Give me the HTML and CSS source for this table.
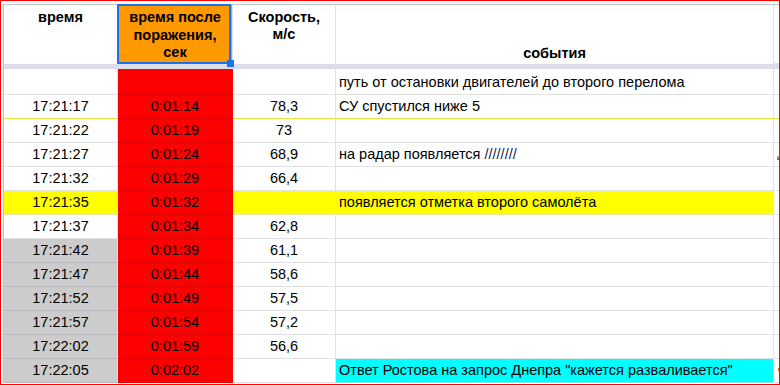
FILE: index.html
```html
<!DOCTYPE html>
<html lang="ru">
<head>
<meta charset="utf-8">
<title>Таблица</title>
<link rel="stylesheet" href="styles.css">
</head>
<body>
<div class="frame">
  <div class="sheet">
    <div class="row head">
      <div class="c h ctr top">время</div>
      <div class="c h ctr top orange">время после<br>поражения,<br>сек</div>
      <div class="c h ctr top">Скорость,<br>м/с</div>
      <div class="c h ctr">события</div>
      <div class="c last"></div>
    </div>
    <div class="band"></div>
    <div class="row first">
      <div class="c ctr"></div>
      <div class="c ctr red"></div>
      <div class="c ctr"></div>
      <div class="c txt">путь от остановки двигателей до второго перелома</div>
      <div class="c last"></div>
    </div>
    <div class="row yb">
      <div class="c ctr">17:21:17</div>
      <div class="c ctr red">0:01:14</div>
      <div class="c ctr">78,3</div>
      <div class="c txt">СУ спустился ниже 5</div>
      <div class="c last"></div>
    </div>
    <div class="row">
      <div class="c ctr">17:21:22</div>
      <div class="c ctr red">0:01:19</div>
      <div class="c ctr">73</div>
      <div class="c txt"></div>
      <div class="c last"></div>
    </div>
    <div class="row">
      <div class="c ctr">17:21:27</div>
      <div class="c ctr red">0:01:24</div>
      <div class="c ctr">68,9</div>
      <div class="c txt"><span>на радар появляется <span class="sl">////////</span></span></div>
      <div class="c last"><span class="frag blue"></span></div>
    </div>
    <div class="row">
      <div class="c ctr">17:21:32</div>
      <div class="c ctr red">0:01:29</div>
      <div class="c ctr">66,4</div>
      <div class="c txt"></div>
      <div class="c last"></div>
    </div>
    <div class="row">
      <div class="c ctr yellow">17:21:35</div>
      <div class="c ctr red">0:01:32</div>
      <div class="c ctr yellow"></div>
      <div class="c txt yellow">появляется отметка второго самолёта</div>
      <div class="c last"></div>
    </div>
    <div class="row">
      <div class="c ctr">17:21:37</div>
      <div class="c ctr red">0:01:34</div>
      <div class="c ctr">62,8</div>
      <div class="c txt"></div>
      <div class="c last"></div>
    </div>
    <div class="row">
      <div class="c ctr gray">17:21:42</div>
      <div class="c ctr red">0:01:39</div>
      <div class="c ctr">61,1</div>
      <div class="c txt"></div>
      <div class="c last"></div>
    </div>
    <div class="row">
      <div class="c ctr gray">17:21:47</div>
      <div class="c ctr red">0:01:44</div>
      <div class="c ctr">58,6</div>
      <div class="c txt"></div>
      <div class="c last"></div>
    </div>
    <div class="row">
      <div class="c ctr gray">17:21:52</div>
      <div class="c ctr red">0:01:49</div>
      <div class="c ctr">57,5</div>
      <div class="c txt"></div>
      <div class="c last"></div>
    </div>
    <div class="row">
      <div class="c ctr gray">17:21:57</div>
      <div class="c ctr red">0:01:54</div>
      <div class="c ctr">57,2</div>
      <div class="c txt"></div>
      <div class="c last"></div>
    </div>
    <div class="row">
      <div class="c ctr gray">17:22:02</div>
      <div class="c ctr red">0:01:59</div>
      <div class="c ctr">56,6</div>
      <div class="c txt"></div>
      <div class="c last"></div>
    </div>
    <div class="row">
      <div class="c ctr gray">17:22:05</div>
      <div class="c ctr red">0:02:02</div>
      <div class="c ctr"></div>
      <div class="c txt cyan">Ответ Ростова на запрос Днепра "кажется разваливается"</div>
      <div class="c last"><span class="frag orangef"></span></div>
    </div>
  </div>
</div>
</body>
</html>
```

FILE: styles.css
```css
* { box-sizing: border-box; }

html, body {
  margin: 0;
  padding: 0;
  background: #ffffff;
}

.frame {
  width: 780px;
  height: 385px;
  border: 1px solid #ff0000;
  padding: 3px 0 0 2px;
  overflow: hidden;
  font-family: "Liberation Sans", Arial, sans-serif;
  font-size: 14.5px;
  color: #000000;
}

.sheet {
  width: 776px;
  border-left: 1px solid #c4c4c4;
  border-top: 1px solid #c4c4c4;
}

.row {
  display: grid;
  grid-template-columns: 114px 115px 103px 438px 5px;
  height: 24px;
}

.row.first { height: 26px; }

.row.head {
  height: 59px;
  position: relative;
  z-index: 2;
}

.band {
  height: 5px;
  background: #dcdde9;
}

.c {
  display: flex;
  align-items: flex-end;
  padding: 0 3px 3px;
  line-height: 17px;
  white-space: nowrap;
  overflow: hidden;
  border-right: 1px solid #e2e2e2;
  border-bottom: 1px solid #e2e2e2;
}

.ctr { justify-content: center; text-align: center; }
.txt { padding-left: 3px; }

.c.last {
  border-right: none;
  padding: 0;
  align-items: center;
}

.h {
  font-weight: bold;
  border-bottom: none;
  padding-bottom: 2px;
}

.h.top {
  align-items: flex-start;
  padding-top: 4px;
}

.orange {
  background: #ff9900;
  position: relative;
  overflow: visible;
  line-height: 17.5px;
}

.orange::after {
  content: "";
  position: absolute;
  left: -1px;
  top: -1px;
  right: 1px;
  bottom: 0;
  border: 2px solid #1a73e8;
}

.orange::before {
  content: "";
  position: absolute;
  left: 109px;
  top: 55px;
  width: 7px;
  height: 7px;
  background: #1a73e8;
  z-index: 3;
}

.red {
  background: #ff0000;
  border-bottom-color: #e20000;
  border-right-color: #ff0000;
}

.yellow {
  background: #ffff00;
  border-bottom-color: #e8e8a0;
}

.gray {
  background: #cccccc;
  border-bottom-color: #b8b8bc;
}

.cyan {
  background: #00ffff;
  border-bottom-color: #7de8e8;
}

.yb .c { border-bottom-color: #e3e33e; }
.yb .c.red { border-bottom-color: #e20000; }

.sl { color: #1b1f4a; }

.frag {
  display: block;
  width: 2px;
  height: 4px;
  margin-left: 3px;
}

.frag.blue {
  margin-top: 6px;
  background: linear-gradient(#f0b040, #3c6ad0);
}

.frag.orangef {
  margin-top: -2px;
  margin-left: 4px;
  height: 3px;
  width: 1px;
  background: #c87020;
}
```
